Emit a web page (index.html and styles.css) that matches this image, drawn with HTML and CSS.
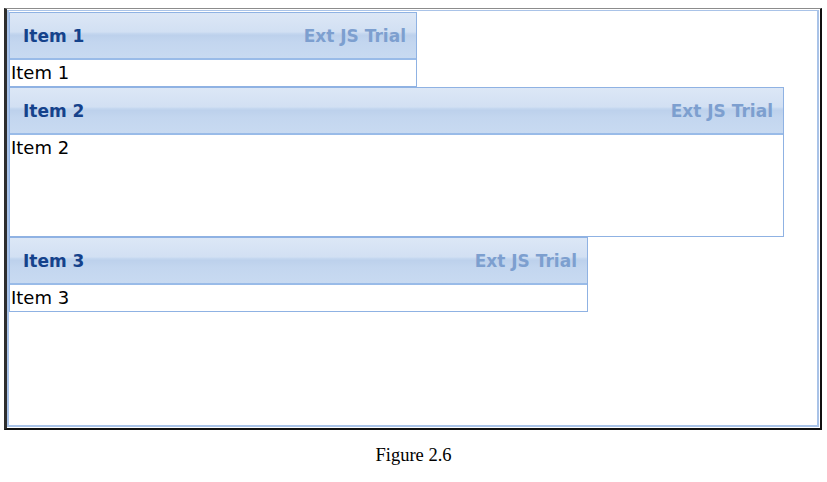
FILE: index.html
```html
<!DOCTYPE html>
<html>
<head>
<meta charset="utf-8">
<link rel="stylesheet" href="styles.css">
</head>
<body>
<div class="frame">
  <div class="viewport">
    <div class="panel panel-1">
      <div class="panel-header"><span class="title">Item 1</span><span class="trial">Ext JS Trial</span></div>
      <div class="panel-body body-short">Item 1</div>
    </div>
    <div class="panel panel-2">
      <div class="panel-header"><span class="title">Item 2</span><span class="trial">Ext JS Trial</span></div>
      <div class="panel-body body-tall">Item 2</div>
    </div>
    <div class="panel panel-3">
      <div class="panel-header"><span class="title">Item 3</span><span class="trial">Ext JS Trial</span></div>
      <div class="panel-body body-short">Item 3</div>
    </div>
  </div>
</div>
<div class="caption">Figure 2.6</div>
</body>
</html>
```
FILE: styles.css
```css
html, body {
  margin: 0;
  padding: 0;
  background: #ffffff;
}
body {
  width: 827px;
  height: 482px;
  overflow: hidden;
}
.frame {
  margin: 8px 5px 0 4px;
  height: 417px;
  border-top: 1px solid #8c8c8c;
  border-left: 3px solid #2e2e2e;
  border-right: 2px solid #111111;
  border-bottom: 2px solid #111111;
  padding: 1px 1px 1px 0;
}
.viewport {
  height: 413px;
  border: 2px solid #a9c3e8;
  border-top-width: 1px;
  padding: 1px 0 0 0;
  display: flex;
  flex-direction: column;
  align-items: flex-start;
}
.panel {
  border: 1px solid #8fb2e3;
  box-sizing: border-box;
  background: #ffffff;
}
.panel-1 { width: 408px; }
.panel-2 { width: 775px; }
.panel-3 { width: 579px; }
.panel-header {
  height: 44px;
  border-bottom: 2px solid #99bbe8;
  background: linear-gradient(to bottom, #dce7f6 0%, #d2e0f3 42%, #c3d6ef 46%, #bdd1ec 50%, #c3d6ef 65%, #c8daf1 100%);
  display: flex;
  align-items: center;
  justify-content: space-between;
  padding: 1px 10px 0 13px;
  font-family: "DejaVu Sans", Verdana, sans-serif;
  font-weight: bold;
  font-size: 17px;
}
.title {
  color: #15428b;
}
.trial {
  color: #7d9fcf;
}
.panel-body {
  font-family: "DejaVu Sans", Verdana, sans-serif;
  font-size: 18px;
  line-height: 26px;
  color: #000000;
  padding-left: 1px;
}
.body-short { height: 26px; }
.body-tall { height: 101px; }
.caption {
  margin-top: 15px;
  text-align: center;
  font-family: "Liberation Serif", "Times New Roman", serif;
  font-size: 18.5px;
  color: #000000;
}
```
